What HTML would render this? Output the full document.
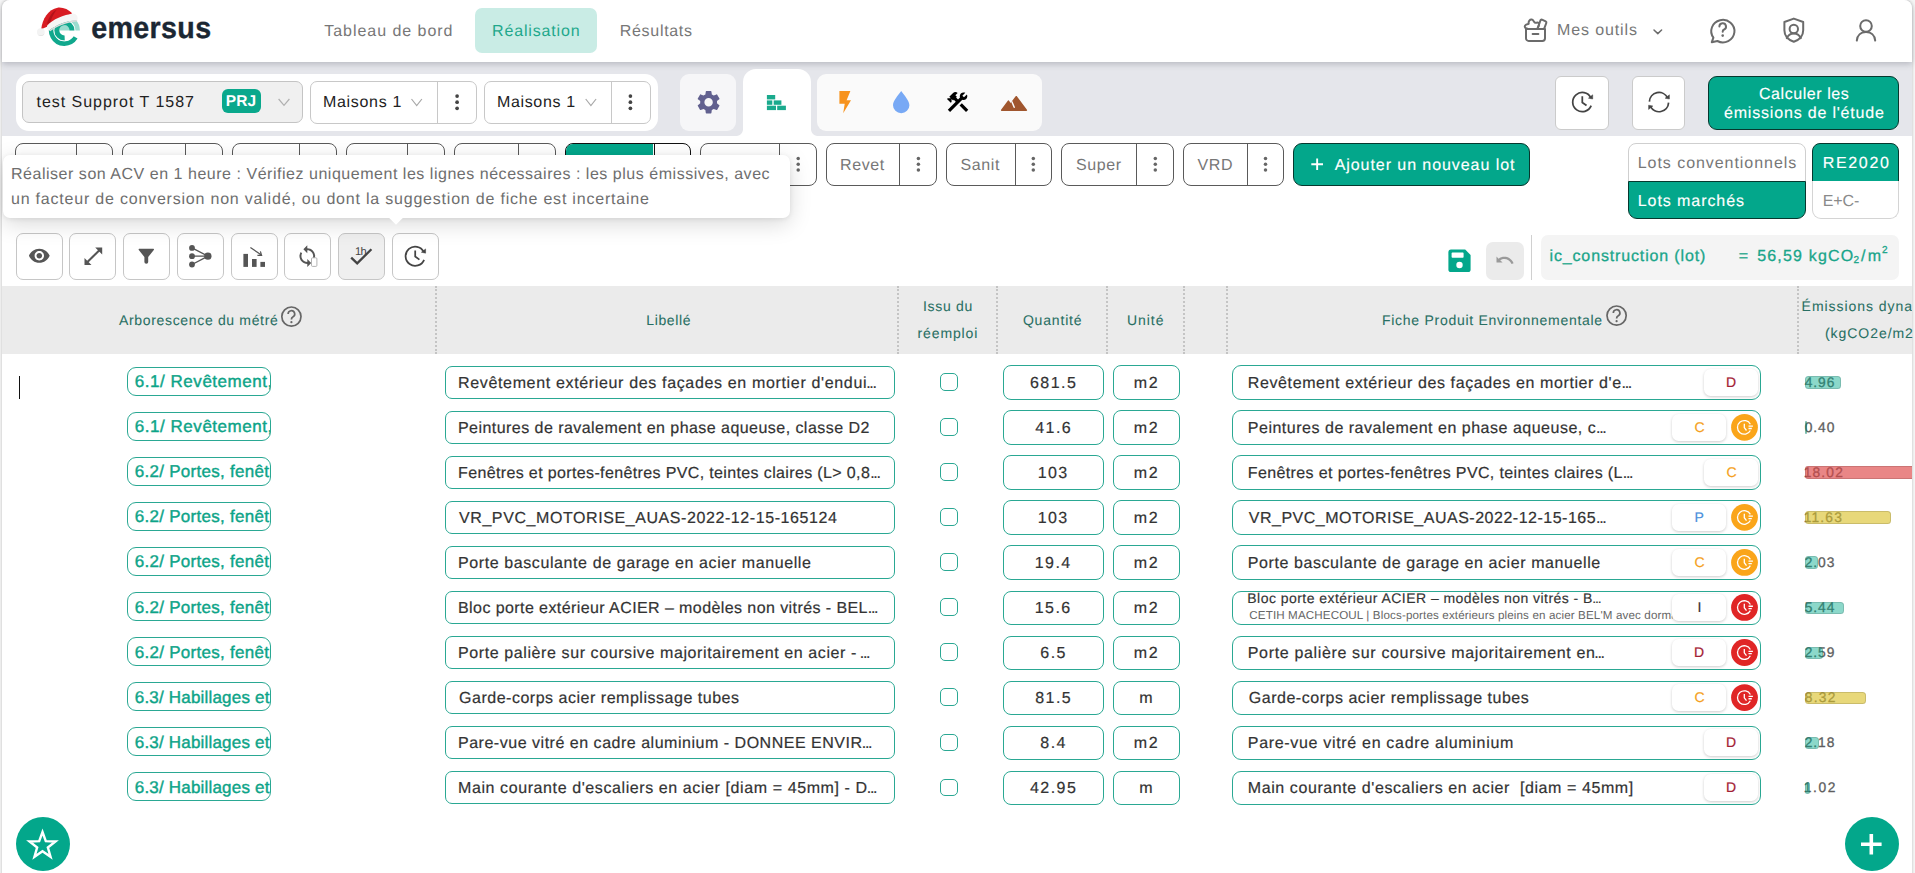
<!DOCTYPE html>
<html lang="fr"><head><meta charset="utf-8"><title>emersus - Réalisation</title>
<style>

html,body{margin:0;padding:0}
body{width:1915px;height:873px;overflow:hidden;position:relative;background:#f6f6f6;font-family:"Liberation Sans",sans-serif;text-rendering:geometricPrecision;}
svg{position:absolute;left:0;top:0;overflow:visible}

</style></head>
<body>
<!-- layer 0 -->
<div style="position:absolute;left:2.00px;top:0.00px;width:1910.40px;height:900.00px;box-sizing:border-box;background:#fff;border-radius:8px 8px 0 0;box-shadow:0 0 3px rgba(0,0,0,.25);"></div>
<div style="position:absolute;left:2.00px;top:62.00px;width:1910.40px;height:73.70px;box-sizing:border-box;background:#e5e6eb;"></div>
<div style="position:absolute;left:2.00px;top:0.00px;width:1910.40px;height:62.00px;box-sizing:border-box;background:#fff;border-radius:8px 8px 0 0;box-shadow:0 2px 6px rgba(60,64,80,.28);"></div>
<!-- layer 1 -->
<span style="position:absolute;left:91.30px;top:15.00px;font-size:28.6px;line-height:1;letter-spacing:0.360px;white-space:pre;color:#1b2733;font-weight:700;-webkit-text-stroke:0.35px #1b2733;transform:scaleY(1.06);transform-origin:0 84.65%;">emersus</span>
<span style="position:absolute;left:324.30px;top:24.00px;font-size:16px;line-height:1;letter-spacing:0.959px;white-space:pre;color:#777;">Tableau de bord</span>
<div style="position:absolute;left:475.00px;top:8.20px;width:122.00px;height:44.40px;box-sizing:border-box;background:#c9ece5;border-radius:7px;"></div>
<span style="position:absolute;left:492.00px;top:24.00px;font-size:16px;line-height:1;letter-spacing:0.844px;white-space:pre;color:#1fa88c;">Réalisation</span>
<span style="position:absolute;left:619.80px;top:24.00px;font-size:16px;line-height:1;letter-spacing:0.687px;white-space:pre;color:#777;">Résultats</span>
<span style="position:absolute;left:1557.00px;top:23.00px;font-size:16px;line-height:1;letter-spacing:0.885px;white-space:pre;color:#777;">Mes outils</span>
<div style="position:absolute;left:16.40px;top:74.20px;width:641.60px;height:56.60px;box-sizing:border-box;background:#fff;border-radius:13px;"></div>
<div style="position:absolute;left:22.40px;top:81.40px;width:281.00px;height:42.00px;box-sizing:border-box;background:#f0f0f0;border:1px solid #c4c4c4;border-radius:7px;"></div>
<span style="position:absolute;left:36.50px;top:95.00px;font-size:16px;line-height:1;letter-spacing:0.969px;white-space:pre;color:#222;">test Supprot T 1587</span>
<div style="position:absolute;left:221.90px;top:88.80px;width:38.70px;height:23.80px;box-sizing:border-box;background:#0aa88c;border-radius:6px;"></div>
<span style="position:absolute;left:225.80px;top:94.00px;font-size:15.5px;line-height:1;letter-spacing:0.132px;white-space:pre;color:#fff;font-weight:700;">PRJ</span>
<div style="position:absolute;left:310.00px;top:81.20px;width:166.70px;height:42.40px;box-sizing:border-box;background:#fff;border:1px solid #c8c8c8;border-radius:7px;"></div>
<div style="position:absolute;left:436.80px;top:81.20px;width:1.00px;height:42.40px;box-sizing:border-box;background:#c8c8c8;"></div>
<span style="position:absolute;left:323.00px;top:95.00px;font-size:16px;line-height:1;letter-spacing:0.685px;white-space:pre;color:#222;">Maisons 1</span>
<div style="position:absolute;left:484.00px;top:81.20px;width:167.00px;height:42.40px;box-sizing:border-box;background:#fff;border:1px solid #c8c8c8;border-radius:7px;"></div>
<div style="position:absolute;left:610.80px;top:81.20px;width:1.00px;height:42.40px;box-sizing:border-box;background:#c8c8c8;"></div>
<span style="position:absolute;left:497.00px;top:95.00px;font-size:16px;line-height:1;letter-spacing:0.647px;white-space:pre;color:#222;">Maisons 1</span>
<div style="position:absolute;left:679.70px;top:74.20px;width:56.60px;height:56.60px;box-sizing:border-box;background:#f6f6f8;border-radius:9px;"></div>
<div style="position:absolute;left:743.00px;top:68.80px;width:67.70px;height:70.00px;box-sizing:border-box;background:#fff;border-radius:13px 13px 0 0;"></div>
<div style="position:absolute;left:736.00px;top:128.80px;width:7.00px;height:7.00px;box-sizing:border-box;background:radial-gradient(circle at 0 0, rgba(255,255,255,0) 6.5px, #fff 7.5px);"></div>
<div style="position:absolute;left:810.70px;top:128.80px;width:7.00px;height:7.00px;box-sizing:border-box;background:radial-gradient(circle at 100% 0, rgba(255,255,255,0) 6.5px, #fff 7.5px);"></div>
<div style="position:absolute;left:817.20px;top:74.20px;width:224.80px;height:56.60px;box-sizing:border-box;background:#fafafa;border-radius:9px;"></div>
<div style="position:absolute;left:1555.40px;top:76.10px;width:53.20px;height:53.60px;box-sizing:border-box;background:#fff;border:1px solid #cbcbcb;border-radius:6px;"></div>
<div style="position:absolute;left:1632.30px;top:76.10px;width:53.20px;height:53.60px;box-sizing:border-box;background:#fff;border:1px solid #cbcbcb;border-radius:6px;"></div>
<div style="position:absolute;left:1708.20px;top:76.20px;width:190.90px;height:53.80px;box-sizing:border-box;background:#03a78b;border:1px solid #06382e;border-radius:9px;"></div>
<span style="position:absolute;left:1759.00px;top:87.00px;font-size:16px;line-height:1;letter-spacing:0.560px;white-space:pre;color:#fff;-webkit-text-stroke:0.15px #fff;">Calculer les</span>
<span style="position:absolute;left:1724.00px;top:106.00px;font-size:16px;line-height:1;letter-spacing:0.812px;white-space:pre;color:#fff;-webkit-text-stroke:0.15px #fff;">émissions de l'étude</span>
<div style="position:absolute;left:15.20px;top:143.40px;width:97.40px;height:42.40px;box-sizing:border-box;background:#fff;border:1px solid #5a5a5a;border-radius:8px;overflow:hidden;"></div>
<div style="position:absolute;left:75.70px;top:143.40px;width:1.00px;height:42.40px;box-sizing:border-box;background:#5a5a5a;"></div>
<span style="position:absolute;left:27.96px;top:158.00px;font-size:16px;line-height:1;letter-spacing:0.880px;white-space:pre;color:#777;">CVC</span>
<div style="position:absolute;left:121.70px;top:143.40px;width:101.30px;height:42.40px;box-sizing:border-box;background:#fff;border:1px solid #5a5a5a;border-radius:8px;overflow:hidden;"></div>
<div style="position:absolute;left:185.30px;top:143.40px;width:1.00px;height:42.40px;box-sizing:border-box;background:#5a5a5a;"></div>
<span style="position:absolute;left:129.01px;top:158.00px;font-size:16px;line-height:1;letter-spacing:0.880px;white-space:pre;color:#777;">Cloiso</span>
<div style="position:absolute;left:232.00px;top:143.40px;width:104.60px;height:42.40px;box-sizing:border-box;background:#fff;border:1px solid #5a5a5a;border-radius:8px;overflow:hidden;"></div>
<div style="position:absolute;left:299.00px;top:143.40px;width:1.00px;height:42.40px;box-sizing:border-box;background:#5a5a5a;"></div>
<span style="position:absolute;left:240.56px;top:158.00px;font-size:16px;line-height:1;letter-spacing:0.880px;white-space:pre;color:#777;">Couve</span>
<div style="position:absolute;left:346.00px;top:143.40px;width:98.80px;height:42.40px;box-sizing:border-box;background:#fff;border:1px solid #5a5a5a;border-radius:8px;overflow:hidden;"></div>
<div style="position:absolute;left:407.00px;top:143.40px;width:1.00px;height:42.40px;box-sizing:border-box;background:#5a5a5a;"></div>
<span style="position:absolute;left:356.17px;top:158.00px;font-size:16px;line-height:1;letter-spacing:0.880px;white-space:pre;color:#777;">Elect</span>
<div style="position:absolute;left:454.00px;top:143.40px;width:101.60px;height:42.40px;box-sizing:border-box;background:#fff;border:1px solid #5a5a5a;border-radius:8px;overflow:hidden;"></div>
<div style="position:absolute;left:518.30px;top:143.40px;width:1.00px;height:42.40px;box-sizing:border-box;background:#5a5a5a;"></div>
<span style="position:absolute;left:463.38px;top:158.00px;font-size:16px;line-height:1;letter-spacing:0.880px;white-space:pre;color:#777;">Equip</span>
<div style="position:absolute;left:565.40px;top:143.40px;width:125.40px;height:42.40px;box-sizing:border-box;background:#fff;border:1px solid #111;border-radius:8px;overflow:hidden;"><div style="position:absolute;left:0;top:0;bottom:0;width:87.1px;background:#03a78b"></div></div>
<div style="position:absolute;left:653.50px;top:143.40px;width:1.00px;height:42.40px;box-sizing:border-box;background:#111;"></div>
<span style="position:absolute;left:580.01px;top:158.00px;font-size:16px;line-height:1;letter-spacing:0.880px;white-space:pre;color:#fff;">Facade</span>
<div style="position:absolute;left:700.00px;top:143.40px;width:116.50px;height:42.40px;box-sizing:border-box;background:#fff;border:1px solid #5a5a5a;border-radius:8px;overflow:hidden;"></div>
<div style="position:absolute;left:779.40px;top:143.40px;width:1.00px;height:42.40px;box-sizing:border-box;background:#5a5a5a;"></div>
<span style="position:absolute;left:716.99px;top:158.00px;font-size:16px;line-height:1;letter-spacing:0.880px;white-space:pre;color:#777;">Infras</span>
<div style="position:absolute;left:826.00px;top:143.40px;width:110.80px;height:42.40px;box-sizing:border-box;background:#fff;border:1px solid #5a5a5a;border-radius:8px;overflow:hidden;"></div>
<div style="position:absolute;left:899.40px;top:143.40px;width:1.00px;height:42.40px;box-sizing:border-box;background:#5a5a5a;"></div>
<span style="position:absolute;left:840.00px;top:158.00px;font-size:16px;line-height:1;letter-spacing:0.587px;white-space:pre;color:#777;">Revet</span>
<div style="position:absolute;left:946.00px;top:143.40px;width:105.60px;height:42.40px;box-sizing:border-box;background:#fff;border:1px solid #5a5a5a;border-radius:8px;overflow:hidden;"></div>
<div style="position:absolute;left:1014.50px;top:143.40px;width:1.00px;height:42.40px;box-sizing:border-box;background:#5a5a5a;"></div>
<span style="position:absolute;left:960.60px;top:158.00px;font-size:16px;line-height:1;letter-spacing:0.594px;white-space:pre;color:#777;">Sanit</span>
<div style="position:absolute;left:1060.90px;top:143.40px;width:112.80px;height:42.40px;box-sizing:border-box;background:#fff;border:1px solid #5a5a5a;border-radius:8px;overflow:hidden;"></div>
<div style="position:absolute;left:1136.30px;top:143.40px;width:1.00px;height:42.40px;box-sizing:border-box;background:#5a5a5a;"></div>
<span style="position:absolute;left:1075.90px;top:158.00px;font-size:16px;line-height:1;letter-spacing:0.631px;white-space:pre;color:#777;">Super</span>
<div style="position:absolute;left:1183.00px;top:143.40px;width:100.80px;height:42.40px;box-sizing:border-box;background:#fff;border:1px solid #5a5a5a;border-radius:8px;overflow:hidden;"></div>
<div style="position:absolute;left:1246.50px;top:143.40px;width:1.00px;height:42.40px;box-sizing:border-box;background:#5a5a5a;"></div>
<span style="position:absolute;left:1197.60px;top:158.00px;font-size:16px;line-height:1;letter-spacing:0.587px;white-space:pre;color:#777;">VRD</span>
<div style="position:absolute;left:1293.00px;top:143.20px;width:237.00px;height:42.50px;box-sizing:border-box;background:#03a78b;border:1px solid #06382e;border-radius:9px;"></div>
<span style="position:absolute;left:1334.70px;top:158.00px;font-size:16px;line-height:1;letter-spacing:0.934px;white-space:pre;color:#fff;-webkit-text-stroke:0.15px #fff;">Ajouter un nouveau lot</span>
<div style="position:absolute;left:1628.20px;top:143.20px;width:178.00px;height:38.60px;box-sizing:border-box;background:#fff;border:1px solid #cfcfcf;border-radius:8px 8px 0 0;"></div>
<div style="position:absolute;left:1628.20px;top:181.20px;width:178.00px;height:37.40px;box-sizing:border-box;background:#03a78b;border:1px solid #06382e;border-radius:0 0 9px 9px;"></div>
<div style="position:absolute;left:1812.20px;top:143.20px;width:87.20px;height:38.60px;box-sizing:border-box;background:#03a78b;border:1px solid #06382e;border-radius:8px 8px 0 0;"></div>
<div style="position:absolute;left:1812.20px;top:181.20px;width:87.20px;height:37.40px;box-sizing:border-box;background:#fff;border:1px solid #d4d4d4;border-top:none;border-radius:0 0 9px 9px;"></div>
<span style="position:absolute;left:1637.75px;top:156.00px;font-size:16px;line-height:1;letter-spacing:0.948px;white-space:pre;color:#777;">Lots conventionnels</span>
<span style="position:absolute;left:1637.75px;top:194.00px;font-size:16px;line-height:1;letter-spacing:0.928px;white-space:pre;color:#fff;-webkit-text-stroke:0.15px #fff;">Lots marchés</span>
<span style="position:absolute;left:1822.75px;top:156.00px;font-size:16px;line-height:1;letter-spacing:1.664px;white-space:pre;color:#fff;-webkit-text-stroke:0.15px #fff;">RE2020</span>
<span style="position:absolute;left:1822.75px;top:194.00px;font-size:16px;line-height:1;letter-spacing:-0.109px;white-space:pre;color:#8a8a8a;">E+C-</span>
<div style="position:absolute;left:16.20px;top:233.30px;width:46.60px;height:46.50px;box-sizing:border-box;background:#fff;border:1px solid #c6c6c6;border-radius:7px;"></div>
<div style="position:absolute;left:69.30px;top:233.30px;width:46.60px;height:46.50px;box-sizing:border-box;background:#fff;border:1px solid #c6c6c6;border-radius:7px;"></div>
<div style="position:absolute;left:123.20px;top:233.30px;width:46.60px;height:46.50px;box-sizing:border-box;background:#fff;border:1px solid #c6c6c6;border-radius:7px;"></div>
<div style="position:absolute;left:177.20px;top:233.30px;width:46.60px;height:46.50px;box-sizing:border-box;background:#fff;border:1px solid #c6c6c6;border-radius:7px;"></div>
<div style="position:absolute;left:231.10px;top:233.30px;width:46.60px;height:46.50px;box-sizing:border-box;background:#fff;border:1px solid #c6c6c6;border-radius:7px;"></div>
<div style="position:absolute;left:284.20px;top:233.30px;width:46.60px;height:46.50px;box-sizing:border-box;background:#fff;border:1px solid #c6c6c6;border-radius:7px;"></div>
<div style="position:absolute;left:338.10px;top:233.30px;width:46.60px;height:46.50px;box-sizing:border-box;background:#efefef;border:1px solid #c6c6c6;border-radius:7px;"></div>
<div style="position:absolute;left:392.20px;top:233.30px;width:46.60px;height:46.50px;box-sizing:border-box;background:#fff;border:1px solid #c6c6c6;border-radius:7px;"></div>
<div style="position:absolute;left:1485.80px;top:242.00px;width:38.20px;height:38.00px;box-sizing:border-box;background:#ebebeb;border-radius:7px;"></div>
<div style="position:absolute;left:1531.00px;top:235.00px;width:1.00px;height:45.00px;box-sizing:border-box;background:#d0d0d0;"></div>
<div style="position:absolute;left:1541.20px;top:234.90px;width:358.00px;height:45.00px;box-sizing:border-box;background:#f4f4f4;border-radius:7px;"></div>
<span style="position:absolute;left:1549.50px;top:249.00px;font-size:16px;line-height:1;letter-spacing:0.855px;white-space:pre;color:#1aa58a;-webkit-text-stroke:0.3px #1aa58a;">ic_construction (lot)</span>
<span style="position:absolute;left:1738.80px;top:249.00px;font-size:16px;line-height:1;letter-spacing:0.000px;white-space:pre;color:#1aa58a;-webkit-text-stroke:0.3px #1aa58a;">=</span>
<span style="position:absolute;left:1757.20px;top:249.00px;font-size:16px;line-height:1;letter-spacing:1.184px;white-space:pre;color:#1aa58a;-webkit-text-stroke:0.3px #1aa58a;">56,59 kgCO</span>
<span style="position:absolute;left:1853.60px;top:256.00px;font-size:10px;line-height:1;letter-spacing:0.000px;white-space:pre;color:#1aa58a;-webkit-text-stroke:0.3px #1aa58a;">2</span>
<span style="position:absolute;left:1860.90px;top:249.00px;font-size:16px;line-height:1;letter-spacing:2.447px;white-space:pre;color:#1aa58a;-webkit-text-stroke:0.3px #1aa58a;">/m</span>
<span style="position:absolute;left:1882.00px;top:246.00px;font-size:10px;line-height:1;letter-spacing:0.000px;white-space:pre;color:#1aa58a;-webkit-text-stroke:0.3px #1aa58a;">2</span>
<div style="position:absolute;left:2.00px;top:286.00px;width:1910.40px;height:67.70px;box-sizing:border-box;background:#ebebeb;"></div>
<div style="position:absolute;left:434.50px;top:286.00px;width:0.00px;height:67.70px;box-sizing:border-box;border-left:2px dotted #c4c4c4;"></div>
<div style="position:absolute;left:896.90px;top:286.00px;width:0.00px;height:67.70px;box-sizing:border-box;border-left:2px dotted #c4c4c4;"></div>
<div style="position:absolute;left:995.50px;top:286.00px;width:0.00px;height:67.70px;box-sizing:border-box;border-left:2px dotted #c4c4c4;"></div>
<div style="position:absolute;left:1105.70px;top:286.00px;width:0.00px;height:67.70px;box-sizing:border-box;border-left:2px dotted #c4c4c4;"></div>
<div style="position:absolute;left:1182.70px;top:286.00px;width:0.00px;height:67.70px;box-sizing:border-box;border-left:2px dotted #c4c4c4;"></div>
<div style="position:absolute;left:1225.70px;top:286.00px;width:0.00px;height:67.70px;box-sizing:border-box;border-left:2px dotted #c4c4c4;"></div>
<div style="position:absolute;left:1796.70px;top:286.00px;width:0.00px;height:67.70px;box-sizing:border-box;border-left:2px dotted #c4c4c4;"></div>
<span style="position:absolute;left:119.00px;top:313.00px;font-size:14px;line-height:1;letter-spacing:0.663px;white-space:pre;color:#286f63;-webkit-text-stroke:0.07px #286f63;">Arborescence du métré</span>
<span style="position:absolute;left:646.30px;top:313.00px;font-size:14px;line-height:1;letter-spacing:0.617px;white-space:pre;color:#286f63;-webkit-text-stroke:0.07px #286f63;">Libellé</span>
<span style="position:absolute;left:922.90px;top:299.00px;font-size:14px;line-height:1;letter-spacing:0.708px;white-space:pre;color:#286f63;-webkit-text-stroke:0.07px #286f63;">Issu du</span>
<span style="position:absolute;left:917.60px;top:326.00px;font-size:14px;line-height:1;letter-spacing:0.858px;white-space:pre;color:#286f63;-webkit-text-stroke:0.07px #286f63;">réemploi</span>
<span style="position:absolute;left:1022.90px;top:313.00px;font-size:14px;line-height:1;letter-spacing:0.821px;white-space:pre;color:#286f63;-webkit-text-stroke:0.07px #286f63;">Quantité</span>
<span style="position:absolute;left:1127.00px;top:313.00px;font-size:14px;line-height:1;letter-spacing:0.950px;white-space:pre;color:#286f63;-webkit-text-stroke:0.07px #286f63;">Unité</span>
<span style="position:absolute;left:1382.00px;top:313.00px;font-size:14px;line-height:1;letter-spacing:0.722px;white-space:pre;color:#286f63;-webkit-text-stroke:0.07px #286f63;">Fiche Produit Environnementale</span>
<div style="position:absolute;left:1800.00px;top:290.00px;width:112.40px;height:60.00px;box-sizing:border-box;overflow:hidden;"></div>
<span style="position:absolute;left:1801.60px;top:299.00px;font-size:14px;line-height:1;letter-spacing:0.950px;white-space:pre;color:#286f63;-webkit-text-stroke:0.07px #286f63;width:110.40px;clip-path:inset(-9px 0 -9px -2px);">Émissions dynamiques</span>
<span style="position:absolute;left:1825.00px;top:326.00px;font-size:14px;line-height:1;letter-spacing:0.950px;white-space:pre;color:#286f63;-webkit-text-stroke:0.07px #286f63;width:88.00px;clip-path:inset(-9px 0 -9px -2px);">(kgCO2e/m2 SDP)</span>
<div style="position:absolute;left:127.00px;top:366.80px;width:143.80px;height:29.20px;box-sizing:border-box;border:1.2px solid #2aa893;border-radius:9px;overflow:hidden;background:#fff;"></div>
<span style="position:absolute;left:134.80px;top:373.00px;font-size:17px;line-height:1;letter-spacing:0.534px;white-space:pre;color:#0da488;-webkit-text-stroke:0.4px #0da488;width:135.20px;clip-path:inset(-9px 0 -9px -2px);">6.1/ Revêtement, isolation et doublage extérieur</span>
<div style="position:absolute;left:445.00px;top:366.00px;width:450.00px;height:32.60px;box-sizing:border-box;border:1.2px solid #2aa893;border-radius:7px;background:#fff;"></div>
<span style="position:absolute;left:458.00px;top:376.00px;font-size:16px;line-height:1;letter-spacing:0.656px;white-space:pre;color:#333;-webkit-text-stroke:0.2px #333;">Revêtement extérieur des façades en mortier d'endui</span>
<span style="position:absolute;left:866.25px;top:376.00px;font-size:16px;line-height:1;letter-spacing:-1.340px;white-space:pre;color:#333;-webkit-text-stroke:0.2px #333;">...</span>
<div style="position:absolute;left:940.00px;top:373.20px;width:17.70px;height:17.70px;box-sizing:border-box;border:1.2px solid #2aa893;border-radius:5px;background:#fff;"></div>
<div style="position:absolute;left:1002.80px;top:365.30px;width:101.00px;height:34.30px;box-sizing:border-box;border:1.2px solid #2aa893;border-radius:8px;background:#fff;"></div>
<span style="position:absolute;left:1030.03px;top:376.00px;font-size:16px;line-height:1;letter-spacing:1.450px;white-space:pre;color:#333;-webkit-text-stroke:0.2px #333;">681.5</span>
<div style="position:absolute;left:1113.00px;top:365.30px;width:66.70px;height:34.30px;box-sizing:border-box;border:1.2px solid #2aa893;border-radius:8px;background:#fff;"></div>
<span style="position:absolute;left:1133.83px;top:376.00px;font-size:16px;line-height:1;letter-spacing:1.600px;white-space:pre;color:#333;-webkit-text-stroke:0.2px #333;">m2</span>
<div style="position:absolute;left:1232.00px;top:365.30px;width:529.30px;height:34.30px;box-sizing:border-box;border:1.2px solid #2aa893;border-radius:9px;background:#fff;"></div>
<span style="position:absolute;left:1247.80px;top:376.00px;font-size:16px;line-height:1;letter-spacing:0.607px;white-space:pre;color:#333;-webkit-text-stroke:0.2px #333;">Revêtement extérieur des façades en mortier d'e</span>
<span style="position:absolute;left:1621.60px;top:376.00px;font-size:16px;line-height:1;letter-spacing:-1.340px;white-space:pre;color:#333;-webkit-text-stroke:0.2px #333;">...</span>
<div style="position:absolute;left:1703.80px;top:368.80px;width:54.40px;height:27.20px;box-sizing:border-box;background:#fff;border-radius:6.5px;box-shadow:0 1px 3px rgba(0,0,0,.2);"></div>
<span style="position:absolute;left:1725.89px;top:375.00px;font-size:14px;line-height:1;letter-spacing:0.000px;white-space:pre;color:#a32035;-webkit-text-stroke:0.2px #a32035;">D</span>
<span style="position:absolute;left:1804.70px;top:376.00px;font-size:13.8px;line-height:1;letter-spacing:0.938px;white-space:pre;color:#5e5e5e;-webkit-text-stroke:0.3px #5e5e5e;">4.96</span>
<div style="position:absolute;left:1804.50px;top:376.30px;width:36.25px;height:12.60px;box-sizing:border-box;background:rgba(0,168,138,.45);border:1px solid rgba(0,0,0,.13);border-radius:3.5px;"></div>
<div style="position:absolute;left:127.00px;top:411.84px;width:143.80px;height:29.20px;box-sizing:border-box;border:1.2px solid #2aa893;border-radius:9px;overflow:hidden;background:#fff;"></div>
<span style="position:absolute;left:134.80px;top:418.00px;font-size:17px;line-height:1;letter-spacing:0.534px;white-space:pre;color:#0da488;-webkit-text-stroke:0.4px #0da488;width:135.20px;clip-path:inset(-9px 0 -9px -2px);">6.1/ Revêtement, isolation et doublage extérieur</span>
<div style="position:absolute;left:445.00px;top:411.04px;width:450.00px;height:32.60px;box-sizing:border-box;border:1.2px solid #2aa893;border-radius:7px;background:#fff;"></div>
<span style="position:absolute;left:458.00px;top:421.00px;font-size:16px;line-height:1;letter-spacing:0.452px;white-space:pre;color:#333;-webkit-text-stroke:0.2px #333;">Peintures de ravalement en phase aqueuse, classe D2</span>
<div style="position:absolute;left:940.00px;top:418.24px;width:17.70px;height:17.70px;box-sizing:border-box;border:1.2px solid #2aa893;border-radius:5px;background:#fff;"></div>
<div style="position:absolute;left:1002.80px;top:410.34px;width:101.00px;height:34.30px;box-sizing:border-box;border:1.2px solid #2aa893;border-radius:8px;background:#fff;"></div>
<span style="position:absolute;left:1035.20px;top:421.00px;font-size:16px;line-height:1;letter-spacing:1.450px;white-space:pre;color:#333;-webkit-text-stroke:0.2px #333;">41.6</span>
<div style="position:absolute;left:1113.00px;top:410.34px;width:66.70px;height:34.30px;box-sizing:border-box;border:1.2px solid #2aa893;border-radius:8px;background:#fff;"></div>
<span style="position:absolute;left:1133.83px;top:421.00px;font-size:16px;line-height:1;letter-spacing:1.600px;white-space:pre;color:#333;-webkit-text-stroke:0.2px #333;">m2</span>
<div style="position:absolute;left:1232.00px;top:410.34px;width:529.30px;height:34.30px;box-sizing:border-box;border:1.2px solid #2aa893;border-radius:9px;background:#fff;"></div>
<span style="position:absolute;left:1247.80px;top:421.00px;font-size:16px;line-height:1;letter-spacing:0.513px;white-space:pre;color:#333;-webkit-text-stroke:0.2px #333;">Peintures de ravalement en phase aqueuse, c</span>
<span style="position:absolute;left:1596.10px;top:421.00px;font-size:16px;line-height:1;letter-spacing:-1.340px;white-space:pre;color:#333;-webkit-text-stroke:0.2px #333;">...</span>
<div style="position:absolute;left:1671.80px;top:413.84px;width:54.40px;height:27.20px;box-sizing:border-box;background:#fff;border-radius:6.5px;box-shadow:0 1px 3px rgba(0,0,0,.2);"></div>
<span style="position:absolute;left:1694.39px;top:420.00px;font-size:14px;line-height:1;letter-spacing:0.000px;white-space:pre;color:#f5a020;-webkit-text-stroke:0.2px #f5a020;">C</span>
<span style="position:absolute;left:1804.70px;top:421.00px;font-size:13.8px;line-height:1;letter-spacing:0.938px;white-space:pre;color:#5e5e5e;-webkit-text-stroke:0.3px #5e5e5e;">0.40</span>
<div style="position:absolute;left:1804.50px;top:421.34px;width:2.60px;height:12.60px;box-sizing:border-box;background:rgba(0,168,138,.45);border:1px solid rgba(0,0,0,.13);border-radius:3.5px;"></div>
<div style="position:absolute;left:127.00px;top:456.88px;width:143.80px;height:29.20px;box-sizing:border-box;border:1.2px solid #2aa893;border-radius:9px;overflow:hidden;background:#fff;"></div>
<span style="position:absolute;left:134.80px;top:463.00px;font-size:17px;line-height:1;letter-spacing:0.275px;white-space:pre;color:#0da488;-webkit-text-stroke:0.4px #0da488;width:135.20px;clip-path:inset(-9px 0 -9px -2px);">6.2/ Portes, fenêtres, fermetures, protections solaires</span>
<div style="position:absolute;left:445.00px;top:456.08px;width:450.00px;height:32.60px;box-sizing:border-box;border:1.2px solid #2aa893;border-radius:7px;background:#fff;"></div>
<span style="position:absolute;left:458.00px;top:466.00px;font-size:16px;line-height:1;letter-spacing:0.365px;white-space:pre;color:#333;-webkit-text-stroke:0.2px #333;">Fenêtres et portes-fenêtres PVC, teintes claires (L&gt; 0,8</span>
<span style="position:absolute;left:870.25px;top:466.00px;font-size:16px;line-height:1;letter-spacing:-1.340px;white-space:pre;color:#333;-webkit-text-stroke:0.2px #333;">...</span>
<div style="position:absolute;left:940.00px;top:463.28px;width:17.70px;height:17.70px;box-sizing:border-box;border:1.2px solid #2aa893;border-radius:5px;background:#fff;"></div>
<div style="position:absolute;left:1002.80px;top:455.38px;width:101.00px;height:34.30px;box-sizing:border-box;border:1.2px solid #2aa893;border-radius:8px;background:#fff;"></div>
<span style="position:absolute;left:1037.65px;top:466.00px;font-size:16px;line-height:1;letter-spacing:1.450px;white-space:pre;color:#333;-webkit-text-stroke:0.2px #333;">103</span>
<div style="position:absolute;left:1113.00px;top:455.38px;width:66.70px;height:34.30px;box-sizing:border-box;border:1.2px solid #2aa893;border-radius:8px;background:#fff;"></div>
<span style="position:absolute;left:1133.83px;top:466.00px;font-size:16px;line-height:1;letter-spacing:1.600px;white-space:pre;color:#333;-webkit-text-stroke:0.2px #333;">m2</span>
<div style="position:absolute;left:1232.00px;top:455.38px;width:529.30px;height:34.30px;box-sizing:border-box;border:1.2px solid #2aa893;border-radius:9px;background:#fff;"></div>
<span style="position:absolute;left:1247.80px;top:466.00px;font-size:16px;line-height:1;letter-spacing:0.379px;white-space:pre;color:#333;-webkit-text-stroke:0.2px #333;">Fenêtres et portes-fenêtres PVC, teintes claires (L</span>
<span style="position:absolute;left:1622.85px;top:466.00px;font-size:16px;line-height:1;letter-spacing:-1.340px;white-space:pre;color:#333;-webkit-text-stroke:0.2px #333;">...</span>
<div style="position:absolute;left:1703.80px;top:458.88px;width:54.40px;height:27.20px;box-sizing:border-box;background:#fff;border-radius:6.5px;box-shadow:0 1px 3px rgba(0,0,0,.2);"></div>
<span style="position:absolute;left:1726.39px;top:465.00px;font-size:14px;line-height:1;letter-spacing:0.000px;white-space:pre;color:#f5a020;-webkit-text-stroke:0.2px #f5a020;">C</span>
<span style="position:absolute;left:1803.70px;top:466.00px;font-size:13.8px;line-height:1;letter-spacing:1.160px;white-space:pre;color:#5e5e5e;-webkit-text-stroke:0.3px #5e5e5e;">18.02</span>
<div style="position:absolute;left:1804.50px;top:466.38px;width:107.90px;height:12.60px;box-sizing:border-box;background:rgba(222,72,72,.66);border:1px solid rgba(0,0,0,.13);border-right:none;border-radius:3px 0 0 3px;"></div>
<div style="position:absolute;left:127.00px;top:501.92px;width:143.80px;height:29.20px;box-sizing:border-box;border:1.2px solid #2aa893;border-radius:9px;overflow:hidden;background:#fff;"></div>
<span style="position:absolute;left:134.80px;top:508.00px;font-size:17px;line-height:1;letter-spacing:0.275px;white-space:pre;color:#0da488;-webkit-text-stroke:0.4px #0da488;width:135.20px;clip-path:inset(-9px 0 -9px -2px);">6.2/ Portes, fenêtres, fermetures, protections solaires</span>
<div style="position:absolute;left:445.00px;top:501.12px;width:450.00px;height:32.60px;box-sizing:border-box;border:1.2px solid #2aa893;border-radius:7px;background:#fff;"></div>
<span style="position:absolute;left:459.00px;top:511.00px;font-size:16px;line-height:1;letter-spacing:0.583px;white-space:pre;color:#333;-webkit-text-stroke:0.2px #333;">VR_PVC_MOTORISE_AUAS-2022-12-15-165124</span>
<div style="position:absolute;left:940.00px;top:508.32px;width:17.70px;height:17.70px;box-sizing:border-box;border:1.2px solid #2aa893;border-radius:5px;background:#fff;"></div>
<div style="position:absolute;left:1002.80px;top:500.42px;width:101.00px;height:34.30px;box-sizing:border-box;border:1.2px solid #2aa893;border-radius:8px;background:#fff;"></div>
<span style="position:absolute;left:1037.65px;top:511.00px;font-size:16px;line-height:1;letter-spacing:1.450px;white-space:pre;color:#333;-webkit-text-stroke:0.2px #333;">103</span>
<div style="position:absolute;left:1113.00px;top:500.42px;width:66.70px;height:34.30px;box-sizing:border-box;border:1.2px solid #2aa893;border-radius:8px;background:#fff;"></div>
<span style="position:absolute;left:1133.83px;top:511.00px;font-size:16px;line-height:1;letter-spacing:1.600px;white-space:pre;color:#333;-webkit-text-stroke:0.2px #333;">m2</span>
<div style="position:absolute;left:1232.00px;top:500.42px;width:529.30px;height:34.30px;box-sizing:border-box;border:1.2px solid #2aa893;border-radius:9px;background:#fff;"></div>
<span style="position:absolute;left:1248.80px;top:511.00px;font-size:16px;line-height:1;letter-spacing:0.507px;white-space:pre;color:#333;-webkit-text-stroke:0.2px #333;">VR_PVC_MOTORISE_AUAS-2022-12-15-165</span>
<span style="position:absolute;left:1596.10px;top:511.00px;font-size:16px;line-height:1;letter-spacing:-1.340px;white-space:pre;color:#333;-webkit-text-stroke:0.2px #333;">...</span>
<div style="position:absolute;left:1671.80px;top:503.92px;width:54.40px;height:27.20px;box-sizing:border-box;background:#fff;border-radius:6.5px;box-shadow:0 1px 3px rgba(0,0,0,.2);"></div>
<span style="position:absolute;left:1694.40px;top:510.00px;font-size:14px;line-height:1;letter-spacing:0.000px;white-space:pre;color:#4a8fdc;-webkit-text-stroke:0.2px #4a8fdc;">P</span>
<span style="position:absolute;left:1803.70px;top:511.00px;font-size:13.8px;line-height:1;letter-spacing:1.164px;white-space:pre;color:#5e5e5e;-webkit-text-stroke:0.3px #5e5e5e;">11.63</span>
<div style="position:absolute;left:1804.50px;top:511.42px;width:86.25px;height:12.60px;box-sizing:border-box;background:rgba(218,192,40,.62);border:1px solid rgba(0,0,0,.13);border-radius:3.5px;"></div>
<div style="position:absolute;left:127.00px;top:546.96px;width:143.80px;height:29.20px;box-sizing:border-box;border:1.2px solid #2aa893;border-radius:9px;overflow:hidden;background:#fff;"></div>
<span style="position:absolute;left:134.80px;top:553.00px;font-size:17px;line-height:1;letter-spacing:0.275px;white-space:pre;color:#0da488;-webkit-text-stroke:0.4px #0da488;width:135.20px;clip-path:inset(-9px 0 -9px -2px);">6.2/ Portes, fenêtres, fermetures, protections solaires</span>
<div style="position:absolute;left:445.00px;top:546.16px;width:450.00px;height:32.60px;box-sizing:border-box;border:1.2px solid #2aa893;border-radius:7px;background:#fff;"></div>
<span style="position:absolute;left:458.00px;top:556.00px;font-size:16px;line-height:1;letter-spacing:0.595px;white-space:pre;color:#333;-webkit-text-stroke:0.2px #333;">Porte basculante de garage en acier manuelle</span>
<div style="position:absolute;left:940.00px;top:553.36px;width:17.70px;height:17.70px;box-sizing:border-box;border:1.2px solid #2aa893;border-radius:5px;background:#fff;"></div>
<div style="position:absolute;left:1002.80px;top:545.46px;width:101.00px;height:34.30px;box-sizing:border-box;border:1.2px solid #2aa893;border-radius:8px;background:#fff;"></div>
<span style="position:absolute;left:1034.70px;top:556.00px;font-size:16px;line-height:1;letter-spacing:1.450px;white-space:pre;color:#333;-webkit-text-stroke:0.2px #333;">19.4</span>
<div style="position:absolute;left:1113.00px;top:545.46px;width:66.70px;height:34.30px;box-sizing:border-box;border:1.2px solid #2aa893;border-radius:8px;background:#fff;"></div>
<span style="position:absolute;left:1133.83px;top:556.00px;font-size:16px;line-height:1;letter-spacing:1.600px;white-space:pre;color:#333;-webkit-text-stroke:0.2px #333;">m2</span>
<div style="position:absolute;left:1232.00px;top:545.46px;width:529.30px;height:34.30px;box-sizing:border-box;border:1.2px solid #2aa893;border-radius:9px;background:#fff;"></div>
<span style="position:absolute;left:1247.80px;top:556.00px;font-size:16px;line-height:1;letter-spacing:0.583px;white-space:pre;color:#333;-webkit-text-stroke:0.2px #333;">Porte basculante de garage en acier manuelle</span>
<div style="position:absolute;left:1671.80px;top:548.96px;width:54.40px;height:27.20px;box-sizing:border-box;background:#fff;border-radius:6.5px;box-shadow:0 1px 3px rgba(0,0,0,.2);"></div>
<span style="position:absolute;left:1694.39px;top:555.00px;font-size:14px;line-height:1;letter-spacing:0.000px;white-space:pre;color:#f5a020;-webkit-text-stroke:0.2px #f5a020;">C</span>
<span style="position:absolute;left:1804.70px;top:556.00px;font-size:13.8px;line-height:1;letter-spacing:0.938px;white-space:pre;color:#5e5e5e;-webkit-text-stroke:0.3px #5e5e5e;">2.03</span>
<div style="position:absolute;left:1804.50px;top:556.46px;width:13.00px;height:12.60px;box-sizing:border-box;background:rgba(0,168,138,.45);border:1px solid rgba(0,0,0,.13);border-radius:3.5px;"></div>
<div style="position:absolute;left:127.00px;top:592.00px;width:143.80px;height:29.20px;box-sizing:border-box;border:1.2px solid #2aa893;border-radius:9px;overflow:hidden;background:#fff;"></div>
<span style="position:absolute;left:134.80px;top:599.00px;font-size:17px;line-height:1;letter-spacing:0.275px;white-space:pre;color:#0da488;-webkit-text-stroke:0.4px #0da488;width:135.20px;clip-path:inset(-9px 0 -9px -2px);">6.2/ Portes, fenêtres, fermetures, protections solaires</span>
<div style="position:absolute;left:445.00px;top:591.20px;width:450.00px;height:32.60px;box-sizing:border-box;border:1.2px solid #2aa893;border-radius:7px;background:#fff;"></div>
<span style="position:absolute;left:458.00px;top:601.00px;font-size:16px;line-height:1;letter-spacing:0.418px;white-space:pre;color:#333;-webkit-text-stroke:0.2px #333;">Bloc porte extérieur ACIER – modèles non vitrés - BEL</span>
<span style="position:absolute;left:867.85px;top:601.00px;font-size:16px;line-height:1;letter-spacing:-1.340px;white-space:pre;color:#333;-webkit-text-stroke:0.2px #333;">...</span>
<div style="position:absolute;left:940.00px;top:598.40px;width:17.70px;height:17.70px;box-sizing:border-box;border:1.2px solid #2aa893;border-radius:5px;background:#fff;"></div>
<div style="position:absolute;left:1002.80px;top:590.50px;width:101.00px;height:34.30px;box-sizing:border-box;border:1.2px solid #2aa893;border-radius:8px;background:#fff;"></div>
<span style="position:absolute;left:1034.70px;top:601.00px;font-size:16px;line-height:1;letter-spacing:1.450px;white-space:pre;color:#333;-webkit-text-stroke:0.2px #333;">15.6</span>
<div style="position:absolute;left:1113.00px;top:590.50px;width:66.70px;height:34.30px;box-sizing:border-box;border:1.2px solid #2aa893;border-radius:8px;background:#fff;"></div>
<span style="position:absolute;left:1133.83px;top:601.00px;font-size:16px;line-height:1;letter-spacing:1.600px;white-space:pre;color:#333;-webkit-text-stroke:0.2px #333;">m2</span>
<div style="position:absolute;left:1232.00px;top:590.50px;width:529.30px;height:34.30px;box-sizing:border-box;border:1.2px solid #2aa893;border-radius:9px;background:#fff;"></div>
<span style="position:absolute;left:1247.30px;top:591.00px;font-size:14px;line-height:1;letter-spacing:0.459px;white-space:pre;color:#333;-webkit-text-stroke:0.15px #333;">Bloc porte extérieur ACIER – modèles non vitrés - B</span>
<span style="position:absolute;left:1592.37px;top:591.00px;font-size:14px;line-height:1;letter-spacing:-1.172px;white-space:pre;color:#333;-webkit-text-stroke:0.15px #333;">...</span>
<span style="position:absolute;left:1249.30px;top:610.00px;font-size:11.6px;line-height:1;letter-spacing:0.137px;white-space:pre;color:#666;width:423.30px;clip-path:inset(-9px 0 -9px -2px);">CETIH MACHECOUL | Blocs-portes extérieurs pleins en acier BEL'M avec dormant</span>
<div style="position:absolute;left:1671.80px;top:594.00px;width:54.40px;height:27.20px;box-sizing:border-box;background:#fff;border-radius:6.5px;box-shadow:0 1px 3px rgba(0,0,0,.2);"></div>
<span style="position:absolute;left:1697.40px;top:600.00px;font-size:14px;line-height:1;letter-spacing:0.000px;white-space:pre;color:#333;-webkit-text-stroke:0.2px #333;">I</span>
<span style="position:absolute;left:1804.70px;top:601.00px;font-size:13.8px;line-height:1;letter-spacing:0.938px;white-space:pre;color:#5e5e5e;-webkit-text-stroke:0.3px #5e5e5e;">5.44</span>
<div style="position:absolute;left:1804.50px;top:601.50px;width:39.00px;height:12.60px;box-sizing:border-box;background:rgba(0,168,138,.45);border:1px solid rgba(0,0,0,.13);border-radius:3.5px;"></div>
<div style="position:absolute;left:127.00px;top:637.04px;width:143.80px;height:29.20px;box-sizing:border-box;border:1.2px solid #2aa893;border-radius:9px;overflow:hidden;background:#fff;"></div>
<span style="position:absolute;left:134.80px;top:644.00px;font-size:17px;line-height:1;letter-spacing:0.275px;white-space:pre;color:#0da488;-webkit-text-stroke:0.4px #0da488;width:135.20px;clip-path:inset(-9px 0 -9px -2px);">6.2/ Portes, fenêtres, fermetures, protections solaires</span>
<div style="position:absolute;left:445.00px;top:636.24px;width:450.00px;height:32.60px;box-sizing:border-box;border:1.2px solid #2aa893;border-radius:7px;background:#fff;"></div>
<span style="position:absolute;left:458.00px;top:646.00px;font-size:16px;line-height:1;letter-spacing:0.598px;white-space:pre;color:#333;-webkit-text-stroke:0.2px #333;">Porte palière sur coursive majoritairement en acier -</span>
<span style="position:absolute;left:859.85px;top:646.00px;font-size:16px;line-height:1;letter-spacing:-1.340px;white-space:pre;color:#333;-webkit-text-stroke:0.2px #333;">...</span>
<div style="position:absolute;left:940.00px;top:643.44px;width:17.70px;height:17.70px;box-sizing:border-box;border:1.2px solid #2aa893;border-radius:5px;background:#fff;"></div>
<div style="position:absolute;left:1002.80px;top:635.54px;width:101.00px;height:34.30px;box-sizing:border-box;border:1.2px solid #2aa893;border-radius:8px;background:#fff;"></div>
<span style="position:absolute;left:1040.37px;top:646.00px;font-size:16px;line-height:1;letter-spacing:1.450px;white-space:pre;color:#333;-webkit-text-stroke:0.2px #333;">6.5</span>
<div style="position:absolute;left:1113.00px;top:635.54px;width:66.70px;height:34.30px;box-sizing:border-box;border:1.2px solid #2aa893;border-radius:8px;background:#fff;"></div>
<span style="position:absolute;left:1133.83px;top:646.00px;font-size:16px;line-height:1;letter-spacing:1.600px;white-space:pre;color:#333;-webkit-text-stroke:0.2px #333;">m2</span>
<div style="position:absolute;left:1232.00px;top:635.54px;width:529.30px;height:34.30px;box-sizing:border-box;border:1.2px solid #2aa893;border-radius:9px;background:#fff;"></div>
<span style="position:absolute;left:1247.80px;top:646.00px;font-size:16px;line-height:1;letter-spacing:0.654px;white-space:pre;color:#333;-webkit-text-stroke:0.2px #333;">Porte palière sur coursive majoritairement en</span>
<span style="position:absolute;left:1594.35px;top:646.00px;font-size:16px;line-height:1;letter-spacing:-1.340px;white-space:pre;color:#333;-webkit-text-stroke:0.2px #333;">...</span>
<div style="position:absolute;left:1671.80px;top:639.04px;width:54.40px;height:27.20px;box-sizing:border-box;background:#fff;border-radius:6.5px;box-shadow:0 1px 3px rgba(0,0,0,.2);"></div>
<span style="position:absolute;left:1693.89px;top:645.00px;font-size:14px;line-height:1;letter-spacing:0.000px;white-space:pre;color:#a32035;-webkit-text-stroke:0.2px #a32035;">D</span>
<span style="position:absolute;left:1804.70px;top:646.00px;font-size:13.8px;line-height:1;letter-spacing:0.938px;white-space:pre;color:#5e5e5e;-webkit-text-stroke:0.3px #5e5e5e;">2.59</span>
<div style="position:absolute;left:1804.50px;top:646.54px;width:18.00px;height:12.60px;box-sizing:border-box;background:rgba(0,168,138,.45);border:1px solid rgba(0,0,0,.13);border-radius:3.5px;"></div>
<div style="position:absolute;left:127.00px;top:682.08px;width:143.80px;height:29.20px;box-sizing:border-box;border:1.2px solid #2aa893;border-radius:9px;overflow:hidden;background:#fff;"></div>
<span style="position:absolute;left:134.80px;top:689.00px;font-size:17px;line-height:1;letter-spacing:0.188px;white-space:pre;color:#0da488;-webkit-text-stroke:0.4px #0da488;width:135.20px;clip-path:inset(-9px 0 -9px -2px);">6.3/ Habillages et ossatures</span>
<div style="position:absolute;left:445.00px;top:681.28px;width:450.00px;height:32.60px;box-sizing:border-box;border:1.2px solid #2aa893;border-radius:7px;background:#fff;"></div>
<span style="position:absolute;left:459.00px;top:691.00px;font-size:16px;line-height:1;letter-spacing:0.519px;white-space:pre;color:#333;-webkit-text-stroke:0.2px #333;">Garde-corps acier remplissage tubes</span>
<div style="position:absolute;left:940.00px;top:688.48px;width:17.70px;height:17.70px;box-sizing:border-box;border:1.2px solid #2aa893;border-radius:5px;background:#fff;"></div>
<div style="position:absolute;left:1002.80px;top:680.58px;width:101.00px;height:34.30px;box-sizing:border-box;border:1.2px solid #2aa893;border-radius:8px;background:#fff;"></div>
<span style="position:absolute;left:1035.20px;top:691.00px;font-size:16px;line-height:1;letter-spacing:1.450px;white-space:pre;color:#333;-webkit-text-stroke:0.2px #333;">81.5</span>
<div style="position:absolute;left:1113.00px;top:680.58px;width:66.70px;height:34.30px;box-sizing:border-box;border:1.2px solid #2aa893;border-radius:8px;background:#fff;"></div>
<span style="position:absolute;left:1139.30px;top:691.00px;font-size:16px;line-height:1;letter-spacing:1.600px;white-space:pre;color:#333;-webkit-text-stroke:0.2px #333;">m</span>
<div style="position:absolute;left:1232.00px;top:680.58px;width:529.30px;height:34.30px;box-sizing:border-box;border:1.2px solid #2aa893;border-radius:9px;background:#fff;"></div>
<span style="position:absolute;left:1248.80px;top:691.00px;font-size:16px;line-height:1;letter-spacing:0.519px;white-space:pre;color:#333;-webkit-text-stroke:0.2px #333;">Garde-corps acier remplissage tubes</span>
<div style="position:absolute;left:1671.80px;top:684.08px;width:54.40px;height:27.20px;box-sizing:border-box;background:#fff;border-radius:6.5px;box-shadow:0 1px 3px rgba(0,0,0,.2);"></div>
<span style="position:absolute;left:1694.39px;top:690.00px;font-size:14px;line-height:1;letter-spacing:0.000px;white-space:pre;color:#f5a020;-webkit-text-stroke:0.2px #f5a020;">C</span>
<span style="position:absolute;left:1804.70px;top:691.00px;font-size:13.8px;line-height:1;letter-spacing:1.271px;white-space:pre;color:#5e5e5e;-webkit-text-stroke:0.3px #5e5e5e;">8.32</span>
<div style="position:absolute;left:1804.50px;top:691.58px;width:61.00px;height:12.60px;box-sizing:border-box;background:rgba(218,192,40,.62);border:1px solid rgba(0,0,0,.13);border-radius:3.5px;"></div>
<div style="position:absolute;left:127.00px;top:727.12px;width:143.80px;height:29.20px;box-sizing:border-box;border:1.2px solid #2aa893;border-radius:9px;overflow:hidden;background:#fff;"></div>
<span style="position:absolute;left:134.80px;top:734.00px;font-size:17px;line-height:1;letter-spacing:0.188px;white-space:pre;color:#0da488;-webkit-text-stroke:0.4px #0da488;width:135.20px;clip-path:inset(-9px 0 -9px -2px);">6.3/ Habillages et ossatures</span>
<div style="position:absolute;left:445.00px;top:726.32px;width:450.00px;height:32.60px;box-sizing:border-box;border:1.2px solid #2aa893;border-radius:7px;background:#fff;"></div>
<span style="position:absolute;left:458.00px;top:736.00px;font-size:16px;line-height:1;letter-spacing:0.519px;white-space:pre;color:#333;-webkit-text-stroke:0.2px #333;">Pare-vue vitré en cadre aluminium - DONNEE ENVIR</span>
<span style="position:absolute;left:861.85px;top:736.00px;font-size:16px;line-height:1;letter-spacing:-1.340px;white-space:pre;color:#333;-webkit-text-stroke:0.2px #333;">...</span>
<div style="position:absolute;left:940.00px;top:733.52px;width:17.70px;height:17.70px;box-sizing:border-box;border:1.2px solid #2aa893;border-radius:5px;background:#fff;"></div>
<div style="position:absolute;left:1002.80px;top:725.62px;width:101.00px;height:34.30px;box-sizing:border-box;border:1.2px solid #2aa893;border-radius:8px;background:#fff;"></div>
<span style="position:absolute;left:1040.37px;top:736.00px;font-size:16px;line-height:1;letter-spacing:1.450px;white-space:pre;color:#333;-webkit-text-stroke:0.2px #333;">8.4</span>
<div style="position:absolute;left:1113.00px;top:725.62px;width:66.70px;height:34.30px;box-sizing:border-box;border:1.2px solid #2aa893;border-radius:8px;background:#fff;"></div>
<span style="position:absolute;left:1133.83px;top:736.00px;font-size:16px;line-height:1;letter-spacing:1.600px;white-space:pre;color:#333;-webkit-text-stroke:0.2px #333;">m2</span>
<div style="position:absolute;left:1232.00px;top:725.62px;width:529.30px;height:34.30px;box-sizing:border-box;border:1.2px solid #2aa893;border-radius:9px;background:#fff;"></div>
<span style="position:absolute;left:1247.80px;top:736.00px;font-size:16px;line-height:1;letter-spacing:0.683px;white-space:pre;color:#333;-webkit-text-stroke:0.2px #333;">Pare-vue vitré en cadre aluminium</span>
<div style="position:absolute;left:1703.80px;top:729.12px;width:54.40px;height:27.20px;box-sizing:border-box;background:#fff;border-radius:6.5px;box-shadow:0 1px 3px rgba(0,0,0,.2);"></div>
<span style="position:absolute;left:1725.89px;top:735.00px;font-size:14px;line-height:1;letter-spacing:0.000px;white-space:pre;color:#a32035;-webkit-text-stroke:0.2px #a32035;">D</span>
<span style="position:absolute;left:1804.70px;top:736.00px;font-size:13.8px;line-height:1;letter-spacing:0.938px;white-space:pre;color:#5e5e5e;-webkit-text-stroke:0.3px #5e5e5e;">2.18</span>
<div style="position:absolute;left:1804.50px;top:736.62px;width:14.50px;height:12.60px;box-sizing:border-box;background:rgba(0,168,138,.45);border:1px solid rgba(0,0,0,.13);border-radius:3.5px;"></div>
<div style="position:absolute;left:127.00px;top:772.16px;width:143.80px;height:29.20px;box-sizing:border-box;border:1.2px solid #2aa893;border-radius:9px;overflow:hidden;background:#fff;"></div>
<span style="position:absolute;left:134.80px;top:779.00px;font-size:17px;line-height:1;letter-spacing:0.188px;white-space:pre;color:#0da488;-webkit-text-stroke:0.4px #0da488;width:135.20px;clip-path:inset(-9px 0 -9px -2px);">6.3/ Habillages et ossatures</span>
<div style="position:absolute;left:445.00px;top:771.36px;width:450.00px;height:32.60px;box-sizing:border-box;border:1.2px solid #2aa893;border-radius:7px;background:#fff;"></div>
<span style="position:absolute;left:458.00px;top:781.00px;font-size:16px;line-height:1;letter-spacing:0.595px;white-space:pre;color:#333;-webkit-text-stroke:0.2px #333;">Main courante d'escaliers en acier [diam = 45mm] - D</span>
<span style="position:absolute;left:866.85px;top:781.00px;font-size:16px;line-height:1;letter-spacing:-1.340px;white-space:pre;color:#333;-webkit-text-stroke:0.2px #333;">...</span>
<div style="position:absolute;left:940.00px;top:778.56px;width:17.70px;height:17.70px;box-sizing:border-box;border:1.2px solid #2aa893;border-radius:5px;background:#fff;"></div>
<div style="position:absolute;left:1002.80px;top:770.66px;width:101.00px;height:34.30px;box-sizing:border-box;border:1.2px solid #2aa893;border-radius:8px;background:#fff;"></div>
<span style="position:absolute;left:1030.03px;top:781.00px;font-size:16px;line-height:1;letter-spacing:1.450px;white-space:pre;color:#333;-webkit-text-stroke:0.2px #333;">42.95</span>
<div style="position:absolute;left:1113.00px;top:770.66px;width:66.70px;height:34.30px;box-sizing:border-box;border:1.2px solid #2aa893;border-radius:8px;background:#fff;"></div>
<span style="position:absolute;left:1139.30px;top:781.00px;font-size:16px;line-height:1;letter-spacing:1.600px;white-space:pre;color:#333;-webkit-text-stroke:0.2px #333;">m</span>
<div style="position:absolute;left:1232.00px;top:770.66px;width:529.30px;height:34.30px;box-sizing:border-box;border:1.2px solid #2aa893;border-radius:9px;background:#fff;"></div>
<span style="position:absolute;left:1247.80px;top:781.00px;font-size:16px;line-height:1;letter-spacing:0.583px;white-space:pre;color:#333;-webkit-text-stroke:0.2px #333;">Main courante d'escaliers en acier  [diam = 45mm]</span>
<div style="position:absolute;left:1703.80px;top:774.16px;width:54.40px;height:27.20px;box-sizing:border-box;background:#fff;border-radius:6.5px;box-shadow:0 1px 3px rgba(0,0,0,.2);"></div>
<span style="position:absolute;left:1725.89px;top:780.00px;font-size:14px;line-height:1;letter-spacing:0.000px;white-space:pre;color:#a32035;-webkit-text-stroke:0.2px #a32035;">D</span>
<span style="position:absolute;left:1803.70px;top:781.00px;font-size:13.8px;line-height:1;letter-spacing:1.605px;white-space:pre;color:#5e5e5e;-webkit-text-stroke:0.3px #5e5e5e;">1.02</span>
<div style="position:absolute;left:1804.50px;top:781.66px;width:5.00px;height:12.60px;box-sizing:border-box;background:rgba(0,168,138,.45);border:1px solid rgba(0,0,0,.13);border-radius:3.5px;"></div>
<div style="position:absolute;left:19.30px;top:376.00px;width:1.00px;height:22.60px;box-sizing:border-box;background:#111;"></div>
<div style="position:absolute;left:16.00px;top:817.00px;width:54.00px;height:54.00px;box-sizing:border-box;background:#03a78b;border-radius:50%;"></div>
<div style="position:absolute;left:1845.00px;top:817.00px;width:54.00px;height:54.00px;box-sizing:border-box;background:#03a78b;border-radius:50%;"></div>
<svg width="1915" height="873" viewBox="0 0 1915 873"><circle cx="94.5" cy="158.5" r="1.75" fill="#666"/><circle cx="94.5" cy="164.2" r="1.75" fill="#666"/><circle cx="94.5" cy="169.9" r="1.75" fill="#666"/><circle cx="204.5" cy="158.5" r="1.75" fill="#666"/><circle cx="204.5" cy="164.2" r="1.75" fill="#666"/><circle cx="204.5" cy="169.9" r="1.75" fill="#666"/><circle cx="318.1" cy="158.5" r="1.75" fill="#666"/><circle cx="318.1" cy="164.2" r="1.75" fill="#666"/><circle cx="318.1" cy="169.9" r="1.75" fill="#666"/><circle cx="426.2" cy="158.5" r="1.75" fill="#666"/><circle cx="426.2" cy="164.2" r="1.75" fill="#666"/><circle cx="426.2" cy="169.9" r="1.75" fill="#666"/><circle cx="537.2" cy="158.5" r="1.75" fill="#666"/><circle cx="537.2" cy="164.2" r="1.75" fill="#666"/><circle cx="537.2" cy="169.9" r="1.75" fill="#666"/><circle cx="672.4" cy="158.5" r="1.75" fill="#666"/><circle cx="672.4" cy="164.2" r="1.75" fill="#666"/><circle cx="672.4" cy="169.9" r="1.75" fill="#666"/><circle cx="798.2" cy="158.5" r="1.75" fill="#666"/><circle cx="798.2" cy="164.2" r="1.75" fill="#666"/><circle cx="798.2" cy="169.9" r="1.75" fill="#666"/><circle cx="918.4" cy="158.5" r="1.75" fill="#666"/><circle cx="918.4" cy="164.2" r="1.75" fill="#666"/><circle cx="918.4" cy="169.9" r="1.75" fill="#666"/><circle cx="1033.3" cy="158.5" r="1.75" fill="#666"/><circle cx="1033.3" cy="164.2" r="1.75" fill="#666"/><circle cx="1033.3" cy="169.9" r="1.75" fill="#666"/><circle cx="1155.3" cy="158.5" r="1.75" fill="#666"/><circle cx="1155.3" cy="164.2" r="1.75" fill="#666"/><circle cx="1155.3" cy="169.9" r="1.75" fill="#666"/><circle cx="1265.5" cy="158.5" r="1.75" fill="#666"/><circle cx="1265.5" cy="164.2" r="1.75" fill="#666"/><circle cx="1265.5" cy="169.9" r="1.75" fill="#666"/></svg>
<!-- layer 2 -->
<div style="position:absolute;left:3.00px;top:155.00px;width:786.80px;height:62.50px;box-sizing:border-box;background:#fff;border-radius:7px;box-shadow:0 6px 22px rgba(0,0,0,.15),0 1px 5px rgba(0,0,0,.08);"></div>
<div style="position:absolute;left:389.50px;top:212.00px;width:12.00px;height:12.00px;box-sizing:border-box;background:#fff;transform:rotate(45deg) scale(.8);"></div>
<span style="position:absolute;left:11.00px;top:167.00px;font-size:16px;line-height:1;letter-spacing:0.526px;white-space:pre;color:#6e6e6e;">Réaliser son ACV en 1 heure : Vérifiez uniquement les lignes nécessaires : les plus émissives, avec</span>
<span style="position:absolute;left:11.00px;top:192.00px;font-size:16px;line-height:1;letter-spacing:0.792px;white-space:pre;color:#6e6e6e;">un facteur de conversion non validé, ou dont la suggestion de fiche est incertaine</span>
<!-- layer 3 -->
<span style="position:absolute;left:355.00px;top:247.00px;font-size:11.2px;line-height:1;letter-spacing:-0.600px;white-space:pre;color:#444;">1h</span>
<svg width="1915" height="873" viewBox="0 0 1915 873" style="z-index:10"><g><path d="M59.2 30.4 A5.2 5.2 0 0 1 69.60000000000001 30.4 Z" fill="#9adccf"/><path d="M64.40 17.20 A13.2 13.2 0 0 1 77.60 30.40" fill="none" stroke="#9adccf" stroke-width="4.6"/><path d="M75.59 37.39 A13.2 13.2 0 1 1 64.40 17.20" fill="none" stroke="#10a88d" stroke-width="4.6"/><path d="M64.67 38.05 A7.65 7.65 0 1 1 72.05 30.40" fill="none" stroke="#10a88d" stroke-width="5.1"/><circle cx="64.4" cy="30.4" r="10.55" fill="none" stroke="#fff" stroke-width="0.6" opacity=".8"/><path d="M41.2 29.2 C42.2 19 48.5 9 57.6 7.7 C63.2 7.1 68.4 9.6 72.2 13.3 L47.6 26.4 Z" fill="#d81b22"/><path d="M46.8 24 C49 16.5 52.5 11.5 56.8 9.4 C53.5 13.5 51.4 18 50.4 22.6 Z" fill="#b3121a"/><path d="M47.2 25.6 C53 19.4 63 14.9 73.8 13.6 C77 14.4 78.3 17.4 77.3 20 C66 21 56 25 49 30.6 C47 29.6 46.4 27.6 47.2 25.6 Z" fill="#f5f5f5"/><path d="M49 30.6 C56 25 66 21 77.3 20 C77.1 20.6 76.9 21 76.5 21.5 C66 22.6 57 26.2 50.2 31.3 Z" fill="#dcdcdc"/><circle cx="40.8" cy="32.1" r="3.9" fill="#f3f3f3"/><path d="M37.6 34.2 A3.9 3.9 0 0 0 44.4 33.6 A4.6 4.6 0 0 1 37.6 34.2 Z" fill="#d9d9d9"/></g>
<g fill="none" stroke="#6b6b6b" stroke-width="2" stroke-linecap="round" stroke-linejoin="round">
 <path d="M1526 29 h19 v9.2 a2.7 2.7 0 0 1 -2.7 2.7 h-13.6 a2.7 2.7 0 0 1 -2.7 -2.7 z"/>
 <path d="M1527 28.6 C1524.4 28.4 1524 25.6 1526.2 24.6 L1528.7 23.7 C1528.2 21.2 1530 19.4 1531.6 19.6 C1533.3 19.8 1533.6 21.6 1534.8 22.6 C1536 23.2 1537.6 22 1538.6 23 C1539.8 24.4 1538.4 26.4 1537.4 28.6"/>
 <path d="M1537.7 28.4 L1540.4 20.5 Q1540.9 19.3 1542 19.7 L1545.7 21.4 Q1546.7 21.9 1546.3 23 L1544.2 28.6"/>
 <path d="M1532.6 33.9 h5.8"/>
</g>
<path d="M1654 30 l3.8 3.6 l3.8 -3.6" fill="none" stroke="#6b6b6b" stroke-width="1.5" stroke-linecap="round" stroke-linejoin="round"/>
<g fill="none" stroke="#6b6b6b" stroke-width="2" stroke-linecap="round" stroke-linejoin="round">
 <path d="M1713.4 37.6 a11.6 11.2 0 1 1 4 3.4 l-5.6 1.2 z"/>
 <path d="M1719.4 26.6 a3.3 3.3 0 1 1 4.4 3.1 q-1.1 0.5 -1.1 2"/>
</g><circle cx="1722.7" cy="35.6" r="1.3" fill="#6b6b6b"/>
<g fill="none" stroke="#6b6b6b" stroke-width="2" stroke-linecap="round" stroke-linejoin="round">
 <path d="M1793.8 18.6 l9.4 3.4 v8.2 c0 5.6 -4 9.6 -9.4 11.6 c-5.4 -2 -9.4 -6 -9.4 -11.6 v-8.2 z"/>
 <circle cx="1793.8" cy="29" r="4.2"/>
 <path d="M1786.8 38.2 c1.6 -3.4 4.4 -4.6 7 -4.6 s5.4 1.2 7 4.6"/>
</g>
<g fill="none" stroke="#6b6b6b" stroke-width="2" stroke-linecap="round" stroke-linejoin="round">
 <circle cx="1866" cy="26" r="5.8"/>
 <path d="M1856.8 40.6 c0.4 -5.6 4.4 -8.6 9.2 -8.6 s8.8 3 9.2 8.6"/>
</g>
<path d="M278.6 99 l5.4 6.4 l5.4 -6.4" fill="none" stroke="#b0b0b0" stroke-width="1.2"/>
<path d="M411.5 99 l5.2 6.6 l5.2 -6.6" fill="none" stroke="#a8a8a8" stroke-width="1.2"/>
<path d="M585.7 99 l5.2 6.6 l5.2 -6.6" fill="none" stroke="#a8a8a8" stroke-width="1.2"/>
<circle cx="457.1" cy="96.1" r="1.85" fill="#444"/>
<circle cx="457.1" cy="102.2" r="1.85" fill="#444"/>
<circle cx="457.1" cy="108.3" r="1.85" fill="#444"/>
<circle cx="630.4" cy="96.1" r="1.85" fill="#444"/>
<circle cx="630.4" cy="102.2" r="1.85" fill="#444"/>
<circle cx="630.4" cy="108.3" r="1.85" fill="#444"/>
<g transform="translate(694.56 88.16) scale(1.17)" ><path d="M19.14 12.94c.04-.3.06-.61.06-.94 0-.32-.02-.64-.07-.94l2.03-1.58c.18-.14.23-.41.12-.61l-1.92-3.32c-.12-.22-.37-.29-.59-.22l-2.39.96c-.5-.38-1.03-.7-1.62-.94l-.36-2.54c-.04-.24-.24-.41-.48-.41h-3.84c-.24 0-.43.17-.47.41l-.36 2.54c-.59.24-1.13.57-1.62.94l-2.39-.96c-.22-.08-.47 0-.59.22L2.74 8.87c-.12.21-.08.47.12.61l2.03 1.58c-.05.3-.09.63-.09.94s.02.64.07.94l-2.03 1.58c-.18.14-.23.41-.12.61l1.92 3.32c.12.22.37.29.59.22l2.39-.96c.5.38 1.03.7 1.62.94l.36 2.54c.05.24.24.41.48.41h3.84c.24 0 .44-.17.47-.41l.36-2.54c.59-.24 1.13-.56 1.62-.94l2.39.96c.22.08.47 0 .59-.22l1.92-3.32c.12-.22.07-.47-.12-.61l-2.01-1.58zM12 15.6c-1.98 0-3.6-1.62-3.6-3.6s1.62-3.6 3.6-3.6 3.6 1.62 3.6 3.6-1.62 3.6-3.6 3.6z" fill="#61608f"/></g>
<rect x="766.9" y="95" width="8.3" height="4.4" fill="#1aaa8d"/>
<rect x="766.9" y="100.4" width="5.4" height="4.4" fill="#1aaa8d"/>
<rect x="773.7" y="100.4" width="7.7" height="4.4" fill="#1aaa8d"/>
<rect x="766.9" y="105.7" width="9.1" height="4.4" fill="#1aaa8d"/>
<rect x="777.2" y="105.7" width="8.7" height="4.4" fill="#1aaa8d"/>
<path d="M839.4 91.1 L850.4 91.1 L846.6 100.3 L851 100.3 L843.2 113.2 L844.7 103.7 L839.4 103.7 Z" fill="#f7931e"/>
<path d="M901.2 91 C904.5 95.5 909.4 101 909.4 105.2 A8.2 8 0 0 1 893 105.2 C893 101 897.9 95.5 901.2 91 Z" fill="#78a9f5"/>
<g transform="translate(944.74 89.20) scale(1.075)" ><path d="M13.783 15.172l2.121-2.121 5.996 5.996-2.121 2.121zM17.5 10c1.93 0 3.5-1.57 3.5-3.5 0-.58-.16-1.12-.41-1.6l-2.7 2.7-1.49-1.49 2.7-2.7c-.48-.25-1.02-.41-1.6-.41C15.57 3 14 4.57 14 6.5c0 .41.08.8.21 1.16l-1.85 1.85-1.78-1.78.71-.71-1.41-1.41L12 3.49c-1.17-1.17-3.07-1.17-4.24 0L4.22 7.03l1.41 1.41H2.81l-.71.71 3.54 3.54.71-.71V9.15l1.41 1.41.71-.71 1.78 1.78-7.41 7.41 2.12 2.12L16.34 9.79c.36.13.75.21 1.16.21z" fill="#000"/></g>
<g transform="translate(1000.56 90.00) scale(1.12)" ><path d="M1 18 L7 10 L9 12.67 L14 6 L23 18 Z" fill="#a0562e" stroke="#a0562e" stroke-width="1.4" stroke-linejoin="round"/></g>
<path d="M1011.9 101.7 L1014.2 107.2" stroke="#fafafa" stroke-width="1.5" stroke-linecap="round" fill="none"/>
<path d="M1591.20 105.70 A9.6 9.6 0 1 1 1590.85 97.74" fill="none" stroke="#444" stroke-width="1.75"/><path d="M1592.70 94.80 L1592.70 99.03 L1588.44 98.16 Z" fill="#444" stroke="#444" stroke-width="0.5" stroke-linejoin="round"/><path d="M1582.30 96.34 V102.48 L1586.52 105.56" fill="none" stroke="#444" stroke-width="1.75" stroke-linejoin="miter"/>
<path d="M424.10 259.80 A9.6 9.6 0 1 1 423.75 251.84" fill="none" stroke="#444" stroke-width="1.75"/><path d="M425.60 248.90 L425.60 253.13 L421.34 252.26 Z" fill="#444" stroke="#444" stroke-width="0.5" stroke-linejoin="round"/><path d="M415.20 250.44 V256.58 L419.42 259.66" fill="none" stroke="#444" stroke-width="1.75" stroke-linejoin="miter"/>
<path d="M1649.41 101.60 A9.6 9.6 0 0 1 1667.55 97.74" fill="none" stroke="#444" stroke-width="1.75"/><path d="M1668.59 102.60 A9.6 9.6 0 0 1 1650.45 106.46" fill="none" stroke="#444" stroke-width="1.75"/><path d="M1669.40 94.80 L1669.40 99.03 L1665.14 98.16 Z" fill="#444" stroke="#444" stroke-width="0.5" stroke-linejoin="round"/><path d="M1648.60 109.40 L1648.60 105.17 L1652.86 106.04 Z" fill="#444" stroke="#444" stroke-width="0.5" stroke-linejoin="round"/>
<g transform="translate(28.02 244.42) scale(0.94)" ><path d="M12 4.5C7 4.5 2.73 7.61 1 12c1.73 4.39 6 7.5 11 7.5s9.27-3.11 11-7.5c-1.73-4.39-6-7.5-11-7.5zM12 17c-2.76 0-5-2.24-5-5s2.24-5 5-5 5 2.24 5 5-2.24 5-5 5zm0-8c-1.66 0-3 1.34-3 3s1.34 3 3 3 3-1.34 3-3-1.34-3-3-3z" fill="#555"/></g>
<path d="M87.4 262.1 L99.4 250.2" stroke="#555" stroke-width="2.1" fill="none"/>
<path d="M102.2 247.4 L95.2 247.4 L102.2 254.4 Z M84.5 265 L91.5 265 L84.5 258 Z" fill="#555"/>
<path d="M139.2 248.8 H153.4 Q154.4 249 153.8 250 L148.2 257 V262 Q148.2 263.7 146.3 263.7 Q144.4 263.7 144.4 262 V257 L138.8 250 Q138.2 249 139.2 248.8 Z" fill="#555"/>
<g stroke="#555" stroke-width="1.3" fill="none"><path d="M192 247.9 L208 256.2 L192 264.5 M192 256.2 H208"/></g>
<circle cx="192" cy="247.9" r="2.9" fill="#555"/><circle cx="192" cy="256.2" r="2.9" fill="#555"/><circle cx="192" cy="264.5" r="2.9" fill="#555"/><circle cx="207.9" cy="256.2" r="3.6" fill="#555"/>
<rect x="243.4" y="253.9" width="4.6" height="13" fill="#555"/><rect x="252" y="259" width="4.6" height="7.9" fill="#555"/><rect x="260.4" y="261.9" width="4.6" height="5" fill="#555"/>
<path d="M250.4 247.4 L261.4 255.1 M257.4 255.4 L261.6 255.3 L260.4 251.4" stroke="#555" stroke-width="1.2" fill="none"/>
<g transform="translate(295.54 244.34) scale(0.98)" ><path d="M12 4V1L8 5l4 4V6c3.31 0 6 2.69 6 6 0 1.01-.25 1.97-.7 2.8l1.46 1.46C19.54 15.03 20 13.57 20 12c0-4.42-3.58-8-8-8zm0 14c-3.31 0-6-2.69-6-6 0-1.01.25-1.97.7-2.8L5.24 7.74C4.46 8.97 4 10.43 4 12c0 4.42 3.58 8 8 8v3l4-4-4-4v3z" fill="#555"/></g>
<rect x="311.5" y="257.8" width="5.4" height="8.6" rx="1" fill="#fff" stroke="#aaa" stroke-width="0.9"/>
<path d="M351.2 257.6 L357.2 263.4 L371.4 249.2" fill="none" stroke="#444" stroke-width="2.3"/>
<path d="M1311.3 164.2 H1323 M1317.15 158.4 V170" stroke="#fff" stroke-width="1.9" fill="none"/>
<path d="M1451 249.6 H1465.2 L1470.6 255 V269.4 Q1470.6 272 1468 272 H1451 Q1448.4 272 1448.4 269.4 V252.2 Q1448.4 249.6 1451 249.6 Z" fill="#03a78b"/>
<rect x="1451.6" y="252.6" width="12" height="5.2" rx="0.8" fill="#fff"/><circle cx="1459.5" cy="265" r="3.2" fill="#fff"/>
<path d="M1496.5 262.6 L1496.5 256.6 L1498.6 258.7 C1503 255.4 1510.5 256.2 1513.6 263.2 L1511.6 263.9 C1509 258.4 1503.6 257.9 1500.2 260.3 L1502.6 262.6 Z" fill="#9a9a9a"/>
<circle cx="291.4" cy="316.6" r="9.6" fill="none" stroke="#666" stroke-width="1.7"/><path d="M288.09999999999997 314.0 a3.3 3.3 0 1 1 4.7 3 q-1.4 0.8 -1.4 2.6" fill="none" stroke="#666" stroke-width="1.7"/><circle cx="291.4" cy="322.20000000000005" r="1.1" fill="#666"/>
<circle cx="1616.6" cy="315.6" r="9.6" fill="none" stroke="#666" stroke-width="1.7"/><path d="M1613.3 313.0 a3.3 3.3 0 1 1 4.7 3 q-1.4 0.8 -1.4 2.6" fill="none" stroke="#666" stroke-width="1.7"/><circle cx="1616.6" cy="321.20000000000005" r="1.1" fill="#666"/>
<circle cx="1744.5" cy="427.29" r="13.4" fill="#faa51a"/>
<g fill="none" stroke="#fff" stroke-width="1.3"><path d="M1750.36 430.48 A6.8 6.8 0 1 1 1750.36 424.30"/><path d="M1744.30 423.69 V427.59 L1746.50 430.49"/><path d="M1748.50 426.09 h4.4 M1748.50 428.49 h3.3"/></g>
<circle cx="1744.5" cy="517.37" r="13.4" fill="#faa51a"/>
<g fill="none" stroke="#fff" stroke-width="1.3"><path d="M1750.36 520.56 A6.8 6.8 0 1 1 1750.36 514.38"/><path d="M1744.30 513.77 V517.67 L1746.50 520.57"/><path d="M1748.50 516.17 h4.4 M1748.50 518.57 h3.3"/></g>
<circle cx="1744.5" cy="562.41" r="13.4" fill="#faa51a"/>
<g fill="none" stroke="#fff" stroke-width="1.3"><path d="M1750.36 565.60 A6.8 6.8 0 1 1 1750.36 559.42"/><path d="M1744.30 558.81 V562.71 L1746.50 565.61"/><path d="M1748.50 561.21 h4.4 M1748.50 563.61 h3.3"/></g>
<circle cx="1744.5" cy="607.45" r="13.4" fill="#e02626"/>
<g fill="none" stroke="#fff" stroke-width="1.3"><path d="M1750.36 610.64 A6.8 6.8 0 1 1 1750.36 604.46"/><path d="M1744.30 603.85 V607.75 L1746.50 610.65"/><path d="M1748.50 606.25 h4.4 M1748.50 608.65 h3.3"/></g>
<circle cx="1744.5" cy="652.49" r="13.4" fill="#e02626"/>
<g fill="none" stroke="#fff" stroke-width="1.3"><path d="M1750.36 655.68 A6.8 6.8 0 1 1 1750.36 649.50"/><path d="M1744.30 648.89 V652.79 L1746.50 655.69"/><path d="M1748.50 651.29 h4.4 M1748.50 653.69 h3.3"/></g>
<circle cx="1744.5" cy="697.53" r="13.4" fill="#e02626"/>
<g fill="none" stroke="#fff" stroke-width="1.3"><path d="M1750.36 700.72 A6.8 6.8 0 1 1 1750.36 694.54"/><path d="M1744.30 693.93 V697.83 L1746.50 700.73"/><path d="M1748.50 696.33 h4.4 M1748.50 698.73 h3.3"/></g>
<polygon points="42.50,832.00 45.79,841.17 55.53,841.47 47.83,847.43 50.55,856.78 42.50,851.30 34.45,856.78 37.17,847.43 29.47,841.47 39.21,841.17" fill="none" stroke="#fff" stroke-width="2.4" stroke-linejoin="miter" stroke-miterlimit="10"/>
<path d="M1861 844.2 H1881.6 M1871.3 833.9 V854.5" stroke="#fff" stroke-width="3.6" fill="none"/></svg>
</body></html>
